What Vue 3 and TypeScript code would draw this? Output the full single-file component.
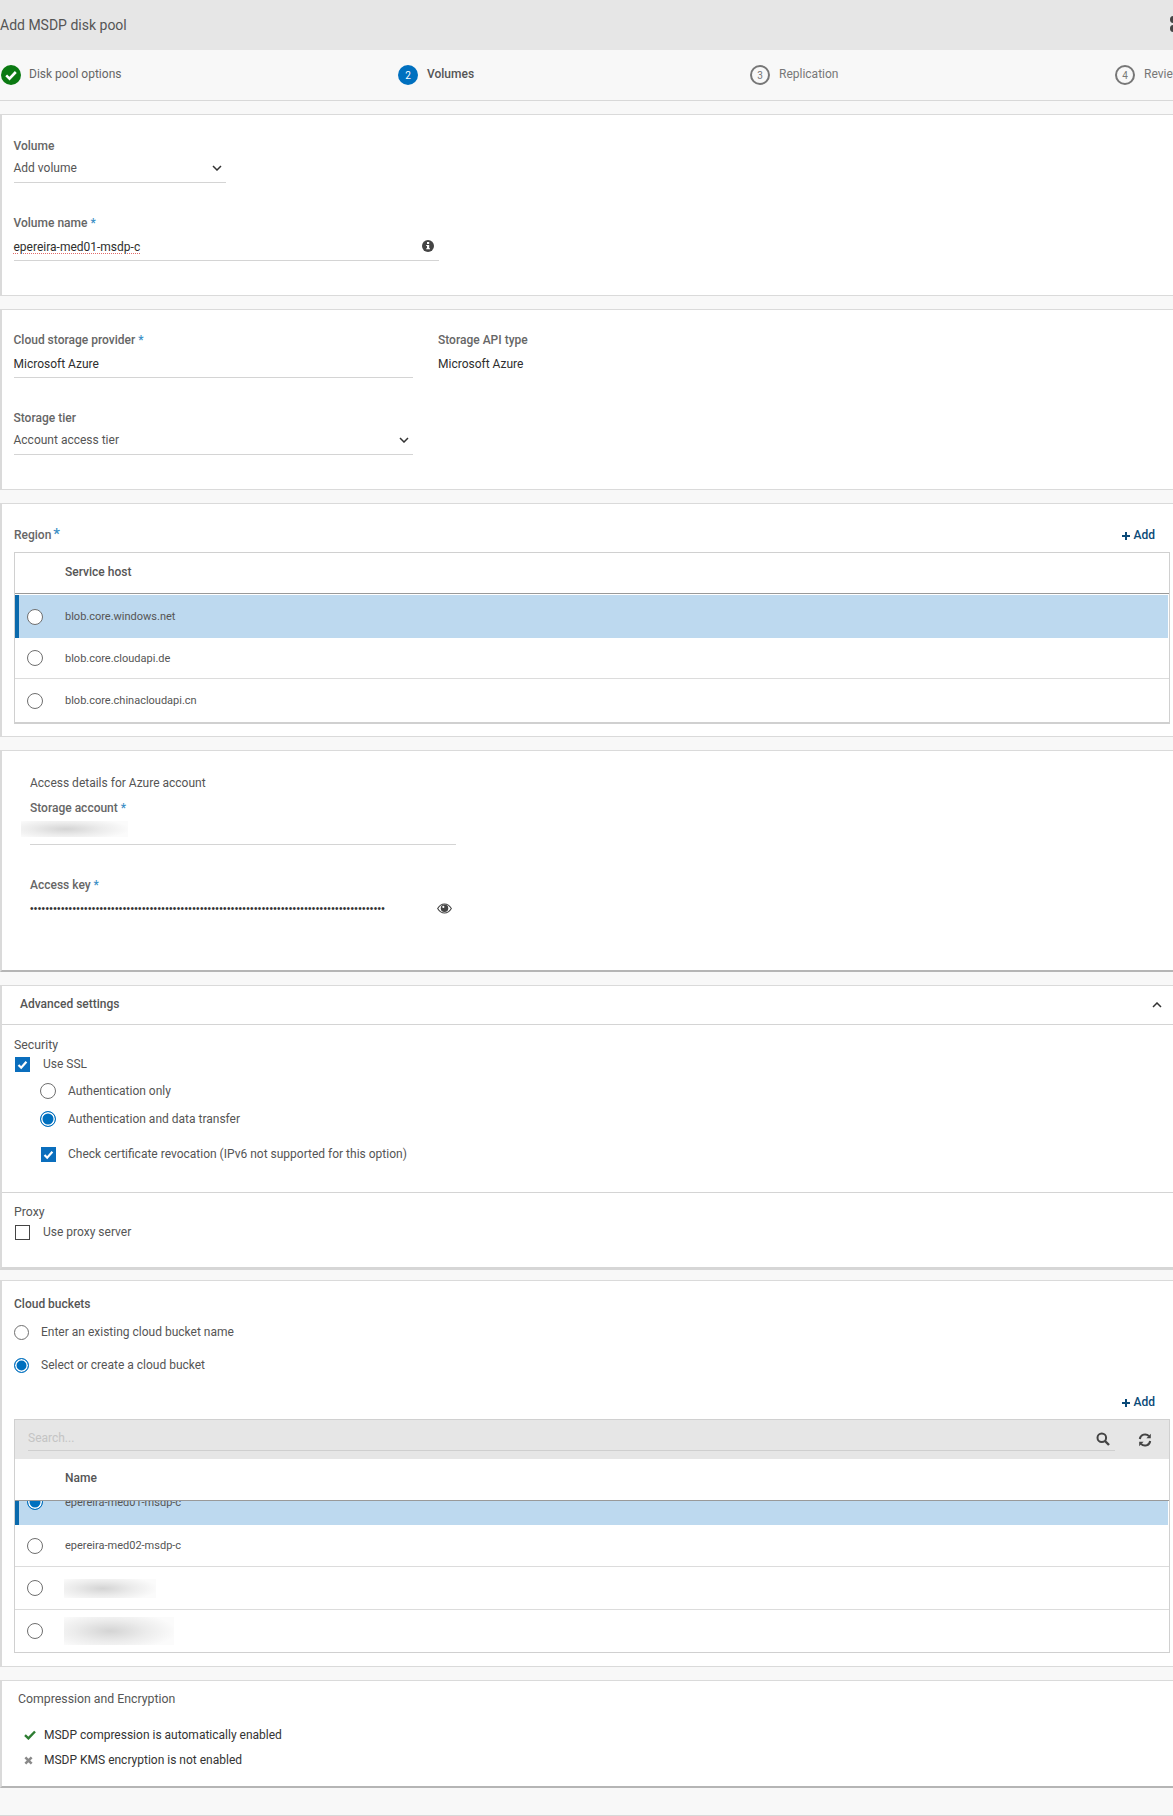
<script setup lang="ts">
const dots: string = '•'.repeat(92)
const steps = [
  { n: '', label: 'Disk pool options', state: 'done' },
  { n: '2', label: 'Volumes', state: 'active' },
  { n: '3', label: 'Replication', state: 'todo' },
  { n: '4', label: 'Review', state: 'todo' },
]
const hosts: string[] = ['blob.core.cloudapi.de', 'blob.core.chinacloudapi.cn']
</script>

<template>
  <div class="page">
    <header class="title-bar">
      <span>Add MSDP disk pool</span>
      <span class="more"><i></i><i></i></span>
    </header>

    <nav class="stepper">
      <div v-for="s in steps" :key="s.label" class="step" :class="s.state">
        <svg v-if="s.state === 'done'" class="step-ico" viewBox="0 0 20 20">
          <circle cx="10" cy="10" r="10" fill="#0b7a12" />
          <path d="M5.2 10.4l3.3 3.2 6.3-6.6" fill="none" stroke="#fff" stroke-width="2.6" />
        </svg>
        <span v-else class="step-num">{{ s.n }}</span>
        <span class="step-label">{{ s.label }}</span>
      </div>
    </nav>

    <section class="card c1">
      <div class="field w-vol">
        <label>Volume</label>
        <div class="control select">
          <span>Add volume</span>
          <svg class="chev" viewBox="0 0 10 6"><path d="M1 1l4 4 4-4" /></svg>
        </div>
      </div>
      <div class="field w-name gap">
        <label>Volume name <b>*</b></label>
        <div class="control input">
          <span class="spell">epereira-med01-msdp-c</span>
          <svg class="info" viewBox="0 0 12 12">
            <circle cx="6" cy="6" r="6" fill="#444" />
            <rect x="5" y="2" width="2.2" height="2" fill="#fff" />
            <path d="M4.2 5h3v3.2h.8v1H4.2v-1H5V6h-.8z" fill="#fff" />
          </svg>
        </div>
      </div>
    </section>

    <section class="card c2">
      <div class="two-col">
        <div class="field w-prov">
          <label>Cloud storage provider <b>*</b></label>
          <div class="control input"><span class="strong">Microsoft Azure</span></div>
        </div>
        <div class="field">
          <label>Storage API type</label>
          <div class="control input plain"><span class="strong">Microsoft Azure</span></div>
        </div>
      </div>
      <div class="field w-prov gap">
        <label>Storage tier</label>
        <div class="control select">
          <span>Account access tier</span>
          <svg class="chev" viewBox="0 0 10 6"><path d="M1 1l4 4 4-4" /></svg>
        </div>
      </div>
    </section>

    <section class="card c3">
      <div class="table-head">
        <label>Region<b class="big">*</b></label>
        <a class="add"><svg viewBox="0 0 10 10"><path d="M5 1v8M1 5h8" /></svg>Add</a>
      </div>
      <div class="table">
        <div class="th">Service host</div>
        <div class="tr selected r-43">
          <span class="radio"></span><span class="td">blob.core.windows.net</span>
        </div>
        <div v-for="(h, i) in hosts" :key="h" class="tr" :class="i === 0 ? 'r-41 ruled' : 'r-43'">
          <span class="radio"></span><span class="td">{{ h }}</span>
        </div>
      </div>
    </section>

    <section class="card c4">
      <div class="c4-title">Access details for Azure account</div>
      <div class="field w-acc">
        <label>Storage account <b>*</b></label>
        <div class="control select"><span class="smudge"></span></div>
      </div>
      <div class="field w-acc gap2">
        <label>Access key <b>*</b></label>
        <div class="control key">
          <span class="dots">{{ dots }}</span>
          <svg class="eye" viewBox="0 0 14 12">
            <path d="M.6 6C2.2 3.3 4.4 1.8 7 1.8S11.800 3.300 13.400 6C11.800 8.700 9.600 10.200 7 10.200S2.200 8.700.6 6z" fill="none" stroke="#444" stroke-width="1" />
            <circle cx="7" cy="5.800" r="3.500" fill="#444" />
            <circle cx="5.900" cy="4.500" r="1" fill="#fff" />
          </svg>
        </div>
      </div>
    </section>

    <section class="card c5">
      <div class="adv-head">
        <span>Advanced settings</span>
        <svg class="chev up" viewBox="0 0 10 6"><path d="M1 5l4-4 4 4" /></svg>
      </div>
      <div class="adv-sec sec-a">
        <div class="sec-title">Security</div>
        <div class="opt o-ssl"><span class="checkbox on"><svg viewBox="0 0 15 15"><path d="M3.500 8l2.700 2.700 5.200-6" /></svg></span><span class="t-ssl">Use SSL</span></div>
        <div class="opt nested o-1"><span class="radio"></span><span>Authentication only</span></div>
        <div class="opt nested o-2"><span class="radio on"></span><span>Authentication and data transfer</span></div>
        <div class="opt nested o-3"><span class="checkbox on"><svg viewBox="0 0 15 15"><path d="M3.500 8l2.700 2.700 5.200-6" /></svg></span><span>Check certificate revocation (IPv6 not supported for this option)</span></div>
      </div>
      <div class="adv-sec sec-b">
        <div class="sec-title">Proxy</div>
        <div class="opt o-proxy"><span class="checkbox"></span><span class="t-ssl">Use proxy server</span></div>
      </div>
    </section>

    <section class="card c6">
      <label class="c6-label">Cloud buckets</label>
      <div class="opt b-1"><span class="radio"></span><span class="t-b">Enter an existing cloud bucket name</span></div>
      <div class="opt b-2"><span class="radio on"></span><span class="t-b">Select or create a cloud bucket</span></div>
      <div class="add-row"><a class="add"><svg viewBox="0 0 10 10"><path d="M5 1v8M1 5h8" /></svg>Add</a></div>
      <div class="table t2">
        <div class="search">
          <div class="search-input">Search...</div>
          <svg class="s-ico" viewBox="0 0 14 14"><circle cx="5.800" cy="5.800" r="4.300" /><path d="M9 9l4 4" stroke-width="2.400" /></svg>
          <svg class="r-ico" viewBox="0 0 14 14">
            <path d="M1.800 6A5.300 5.300 0 0 1 11 3.200M12.200 8A5.300 5.300 0 0 1 3 10.800" />
            <path class="fill" d="M12.800 .8v4.400H8.400zM1.200 13.200V8.800h4.400z" />
          </svg>
        </div>
        <div class="th name">Name</div>
        <div class="tr selected clipped">
          <span class="radio on"></span><span class="td">epereira-med01-msdp-c</span>
        </div>
        <div class="tr r-42 ruled"><span class="radio"></span><span class="td">epereira-med02-msdp-c</span></div>
        <div class="tr r-43 ruled"><span class="radio"></span><span class="smudge s3"></span></div>
        <div class="tr r-42"><span class="radio"></span><span class="smudge s4"></span></div>
      </div>
    </section>

    <section class="card c7">
      <div class="c7-title">Compression and Encryption</div>
      <div class="status s-1">
        <svg viewBox="0 0 12 10"><path d="M1 5.200l3.400 3.200L11 1.500" fill="none" stroke="#2e7d32" stroke-width="2.400" /></svg>
        <span>MSDP compression is automatically enabled</span>
      </div>
      <div class="status s-2">
        <svg viewBox="0 0 10 10"><path d="M1.500 1.500l7 7M8.500 1.500l-7 7" fill="none" stroke="#8a8a8a" stroke-width="2.800" /></svg>
        <span>MSDP KMS encryption is not enabled</span>
      </div>
    </section>
  </div>
</template>

<style>
html, body { margin: 0; padding: 0; background: #f8f8f8; overflow: hidden; }
</style>

<style scoped>
* { box-sizing: border-box; }
.page {
  width: 1173px;
  height: 1816px;
  overflow: hidden;
  background: #f8f8f8;
  border-bottom: 1px solid #d8d8d8;
  font-family: Roboto, "Liberation Sans", sans-serif;
  font-size: 12px;
  color: #444;
}
.title-bar {
  height: 50px;
  background: #e6e6e6;
  display: flex;
  align-items: center;
  justify-content: space-between;
  font-size: 14px;
  color: #555;
  position: relative;
}
.more { width: 3px; height: 16px; display: block; position: relative; }
.more i { position: absolute; left: 0; width: 7px; height: 7px; border-radius: 50%; background: #444; }
.more i:first-child { top: -1px; }
.more i:last-child { top: 8px; }

.stepper {
  height: 51px;
  border-bottom: 1px solid #d8d8d8;
  display: grid;
  grid-template-columns: 397px 352px 365px 1fr;
  padding-left: 1px;
  align-items: center;
  margin-bottom: 13px;
  white-space: nowrap;
  overflow: hidden;
}
.step { display: flex; align-items: center; }
.step-ico { width: 20px; height: 20px; margin-right: 8px; flex: none; }
.step-num {
  width: 20px; height: 20px; border-radius: 50%; margin-right: 9px; flex: none;
  display: flex; align-items: center; justify-content: center; font-size: 10px;
}
.step-label { margin-bottom: 2px; }
.active .step-num { background: #0070bf; color: #fff; }
.active .step-label { font-weight: 500; color: #555; }
.todo .step-num { border: 2px solid #777; color: #777; }
.todo .step-label { color: #777; }
.done .step-label { color: #666; }

.card {
  background: #fff;
  border: 1px solid #dadada;
  border-right: none;
  border-left-width: 2px;
  margin-bottom: 13px;
  padding-left: 12px;
}
.c1 { height: 182px; padding-top: 23px; padding-left: 11.500px; }
.c2 { height: 181px; padding-top: 22px; padding-left: 11.500px; }
.c3 { height: 234px; padding-top: 23px; padding-right: 3px; }
.c4 { height: 222px; padding-top: 24px; padding-left: 28px; border-bottom: 2px solid #b5b5b5; }
.c5 { height: 285px; padding-left: 0; border-bottom: 3px solid #d6d6d6; margin-bottom: 10px; }
.c6 { height: 387px; padding-top: 15px; padding-right: 3px; }
.c7 { height: 108px; padding-top: 10px; padding-left: 16px; border-bottom: 2px solid #b5b5b5; margin-bottom: 0; }

.field label, .table-head label, .c6-label {
  display: block;
  height: 16px;
  line-height: 16px;
  font-weight: 500;
  font-size: 12px;
  color: #666;
}
label b { font-weight: 500; color: #3d8fc6; }
label b.big { font-size: 15px; margin-left: 2px; line-height: 12px; }
.control {
  height: 29px;
  border-bottom: 1px solid #d4d4d4;
  display: flex;
  align-items: center;
  justify-content: space-between;
  position: relative;
  color: #555;
}
.control.select { padding-right: 4px; }
.control.input { height: 30px; padding-top: 2px; padding-right: 4px; }
.control.plain { border-bottom: none; }
.control.key { border-bottom: none; padding-top: 2px; padding-right: 5px; }
.gap { margin-top: 32px; }
.gap2 { margin-top: 32px; }
.w-vol { width: 212px; }
.w-name { width: 425px; }
.w-prov { width: 399px; }
.w-acc { width: 426px; }
.two-col { display: grid; grid-template-columns: 399px 1fr; column-gap: 25.500px; }
.strong, .spell { color: #2e2e2e; }
.spell { text-decoration: underline dotted #e26a6a; text-underline-offset: 2px; }
.chev { width: 10px; height: 6px; fill: none; stroke: #333; stroke-width: 1.500; flex: none; }
.info { width: 12px; height: 12px; margin-top: -2px; margin-right: 1px; }

.table-head { display: flex; justify-content: space-between; align-items: center; height: 16px; margin-bottom: 9px; padding-right: 15px; }
.add { display: flex; align-items: center; color: #0b4a78; font-weight: 500; font-size: 12px; }
.add svg { width: 10px; height: 10px; margin-right: 3px; fill: none; stroke: #0b4a78; stroke-width: 2; margin-top: 2px; }
.table { border: 1px solid #d0d0d0; background: #fff; }
.c3 .table { height: 172px; border-bottom-width: 2px; }
.th {
  height: 41px;
  padding-left: 50px;
  padding-bottom: 2px;
  display: flex;
  align-items: center;
  font-weight: 500;
  color: #555;
  border-bottom: 1px solid #999;
}
.tr { display: flex; align-items: center; padding-left: 12px; position: relative; }
.c3 .selected { margin-top: 1px; }
.selected { background: #bdd9ef; border-left: 4px solid #0a6aad; padding-left: 8px; margin-right: 1px; }
.r-41 { height: 41px; }
.r-42 { height: 42px; }
.r-43 { height: 43px; }
.ruled { border-bottom: 1px solid #dcdcdc; }
.radio {
  width: 16px; height: 16px; border-radius: 50%; border: 1px solid #6f6f6f; background: #fff; flex: none; display: block;
}
.radio.on { border: 1.500px solid #0070bf; box-shadow: inset 0 0 0 1.500px #fff; background: #0070bf; }
.td { margin-left: 22px; color: #555; font-size: 11px; white-space: nowrap; }

.c4-title { height: 16px; line-height: 16px; color: #555; margin-bottom: 9px; }
.smudge {
  display: block;
  width: 107px;
  height: 16px;
  margin-left: -9px;
  margin-top: -3px;
  background: radial-gradient(ellipse 60% 70% at 42% 50%, #d4d4d4 0, #ececec 55%, #fbfbfb 100%);
}
.dots { font-size: 10px; letter-spacing: .36px; color: #333; font-family: "Liberation Sans", sans-serif; white-space: nowrap; }
.eye { width: 15px; height: 13px; margin-right: -1px; }

.adv-head {
  height: 39px;
  border-bottom: 1px solid #d4d4d4;
  padding-left: 18px;
  padding-right: 11px;
  padding-bottom: 2px;
  display: flex;
  align-items: center;
  justify-content: space-between;
  font-weight: 500;
  color: #555;
}
.chev.up { margin-top: 1px; }
.adv-sec { padding-left: 12px; }
.sec-a { height: 168px; padding-top: 12px; border-bottom: 1px solid #d4d4d4; }
.sec-b { padding-top: 11px; }
.sec-title { height: 16px; line-height: 16px; color: #555; font-size: 12.300px; }
.opt { display: flex; align-items: center; height: 20px; color: #555; white-space: nowrap; }
.opt > span:last-child { margin-left: 13px; }
.opt .t-ssl { margin-left: 11px; }
.o-ssl { height: 16px; margin-top: 3px; }
.o-proxy { height: 16px; margin-top: 4px; }
.nested { padding-left: 26px; }
.nested > span:last-child { margin-left: 12px; }
.o-1 { margin-top: 9px; }
.o-2 { margin-top: 8px; }
.o-3 { margin-top: 15px; }
.checkbox { width: 15px; height: 15px; border: 1px solid #444; background: #fff; display: block; flex: none; margin-left: 1px; }
.checkbox.on { background: #0a6ebd; border-color: #0a6ebd; }
.checkbox svg { width: 15px; height: 15px; display: block; margin: -1px; fill: none; stroke: #fff; stroke-width: 2.200; }

.c6-label { color: #555; }
.c6 .opt > span.radio { width: 15px; height: 15px; }
.c6 .opt > span.t-b { margin-left: 12px; }
.b-1 { margin-top: 10px; }
.b-2 { margin-top: 13px; }
.add-row { display: flex; justify-content: flex-end; padding-right: 15px; height: 16px; margin-top: 19px; margin-bottom: 9px; }
.t2 { height: 234px; overflow: hidden; }
.search {
  height: 39px;
  background: #e6e6e6;
  padding: 0 12px 0 13px;
  display: flex;
  align-items: flex-start;
  position: relative;
}
.search-input {
  width: 1087px;
  height: 31px;
  padding-top: 10px;
  line-height: 16px;
  border-bottom: 1px solid #cfcfcf;
  color: #c4c4c4;
  flex: none;
}
.s-ico { position: absolute; left: 1081px; top: 12px; width: 14px; height: 14px; fill: none; stroke: #444; stroke-width: 2; }
.r-ico { position: absolute; left: 1123px; top: 13px; width: 14px; height: 14px; fill: none; stroke: #444; stroke-width: 2; }
.r-ico .fill { fill: #444; stroke: none; }
.th.name { height: 42px; padding-bottom: 3px; }
.clipped { height: 24px; overflow: hidden; align-items: flex-start; }
.clipped .radio { margin-top: -7px; }
.clipped .td { margin-top: -5px; line-height: 14px; }
.smudge.s3 { width: 92px; height: 19px; margin: 0 0 0 21px; }
.smudge.s4 { width: 110px; height: 28px; margin: 0 0 0 21px; }

.c7-title { height: 16px; line-height: 16px; color: #555; font-size: 12.300px; }
.status { display: flex; align-items: center; height: 20px; padding-left: 6px; color: #333; font-size: 12px; }
.status svg { width: 12px; height: 10px; margin-right: 8px; flex: none; }
.s-1 { margin-top: 18px; }
.s-2 { margin-top: 5px; }
.s-2 svg { width: 9px; height: 9px; margin-right: 11px; }
</style>
